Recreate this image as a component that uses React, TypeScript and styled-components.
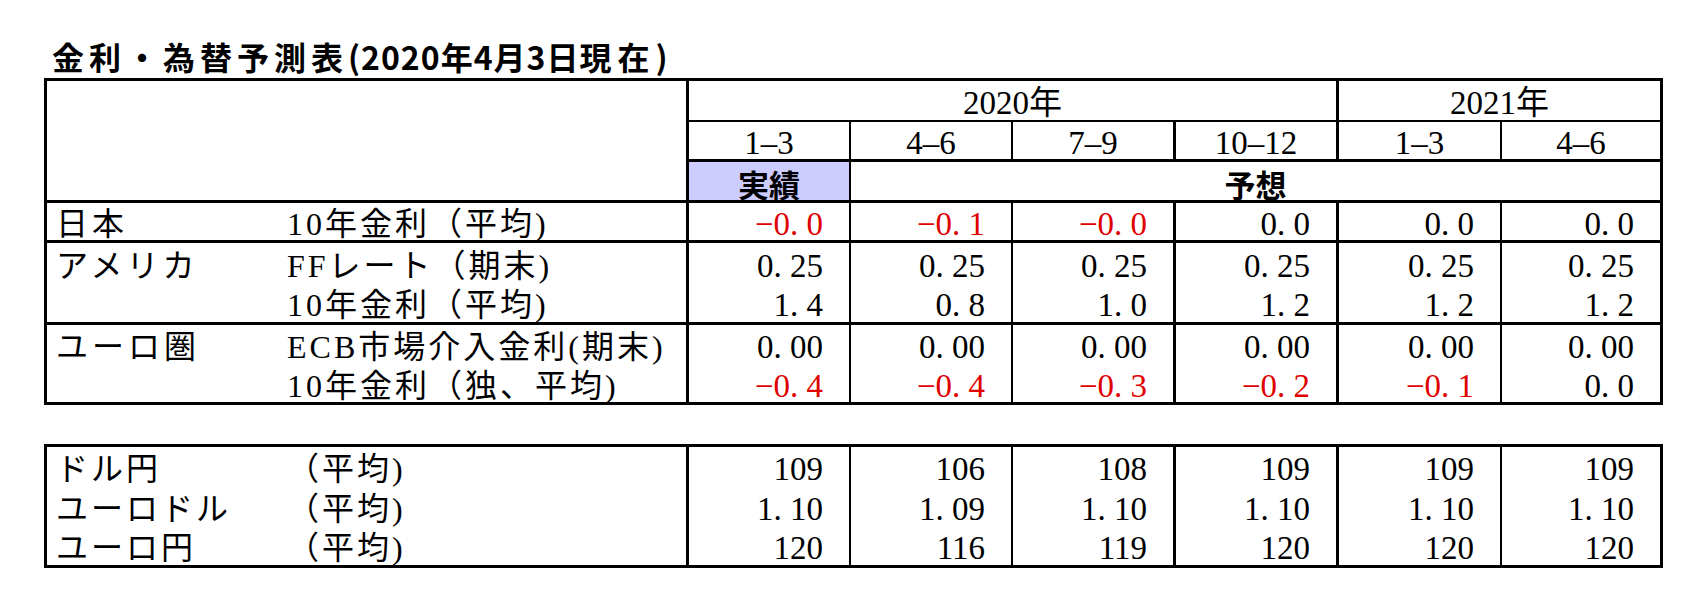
import React from 'react';
import styled, { createGlobalStyle } from 'styled-components';

const Global = createGlobalStyle`
  html, body { margin: 0; padding: 0; background: #ffffff; }
  body {
    font-family: "Liberation Serif", "Noto Sans CJK JP", serif;
    color: #000000;
  }
`;

const Page = styled.div`
  box-sizing: border-box;
  width: 1702px;
  padding: 36px 0 0 44px;
  display: flex;
  flex-direction: column;
`;

const Title = styled.h1`
  margin: 0 0 2px;
  padding-left: 8px;
  height: 40px;
  font-family: "Noto Sans CJK JP", sans-serif;
  font-size: 32px;
  font-weight: 700;
  line-height: 40px;
  white-space: nowrap;
`;

const Spaced = styled.span<{ $ls: number }>`
  letter-spacing: ${(p) => p.$ls}px;
`;

const Sheet = styled.div<{ $rows: string; $mt?: number }>`
  display: grid;
  width: fit-content;
  margin-top: ${(p) => p.$mt ?? 0}px;
  grid-template-columns: 642px 162px 162px 163px 163px 163px 161px;
  grid-template-rows: ${(p) => p.$rows};
  border-left: 3px solid #000;
  border-top: 3px solid #000;
`;

const Cell = styled.div<{ $r: number; $b: number; $span?: number; $rowSpan?: number }>`
  box-sizing: border-box;
  display: flex;
  align-items: center;
  padding-top: 5px;
  min-width: 0;
  white-space: nowrap;
  border-right: ${(p) => p.$r}px solid #000;
  border-bottom: ${(p) => p.$b}px solid #000;
  grid-column: span ${(p) => p.$span ?? 1};
  grid-row: span ${(p) => p.$rowSpan ?? 1};
`;

const HeadCell = styled(Cell)`
  justify-content: center;
  font-size: 33px;
  line-height: 33px;
`;

const StatusCell = styled(Cell)<{ $bg?: string }>`
  justify-content: center;
  background: ${(p) => p.$bg ?? 'transparent'};
  font-family: "Noto Sans CJK JP", sans-serif;
  font-weight: 700;
  font-size: 31px;
  line-height: 33px;
`;

const LabelCell = styled(Cell)`
  padding-left: 9px;
  font-size: 32px;
  line-height: 33px;
`;

const Country = styled.span<{ $ls: number }>`
  width: 231px;
  flex: none;
  letter-spacing: ${(p) => p.$ls}px;
`;

const Item = styled.span`
  letter-spacing: 3px;
`;

const ValueCell = styled(Cell)<{ $red?: boolean }>`
  justify-content: flex-end;
  padding-right: 26px;
  font-size: 33px;
  line-height: 33px;
  color: ${(p) => (p.$red ? '#e00000' : '#000000')};
`;

const Dot = styled.span`
  letter-spacing: 0.25em;
`;

function Num({ text }: { text: string }) {
  const i = text.indexOf('.');
  if (i < 0) return <>{text}</>;
  return (
    <>
      {text.slice(0, i)}
      <Dot>.</Dot>
      {text.slice(i + 1)}
    </>
  );
}

const RIGHT = [2, 2, 3, 3, 2, 3];

type Row = {
  country: string;
  item: string;
  values: string[];
  bottom: number;
};

const rates: Row[] = [
  { country: '日本', item: '10年金利（平均)', values: ['−0.0', '−0.1', '−0.0', '0.0', '0.0', '0.0'], bottom: 3 },
  { country: 'アメリカ', item: 'FFレート（期末)', values: ['0.25', '0.25', '0.25', '0.25', '0.25', '0.25'], bottom: 0 },
  { country: '', item: '10年金利（平均)', values: ['1.4', '0.8', '1.0', '1.2', '1.2', '1.2'], bottom: 3 },
  { country: 'ユーロ圏', item: 'ECB市場介入金利(期末)', values: ['0.00', '0.00', '0.00', '0.00', '0.00', '0.00'], bottom: 0 },
  { country: '', item: '10年金利（独、平均)', values: ['−0.4', '−0.4', '−0.3', '−0.2', '−0.1', '0.0'], bottom: 3 },
];

const fx: Row[] = [
  { country: 'ドル円', item: '（平均)', values: ['109', '106', '108', '109', '109', '109'], bottom: 0 },
  { country: 'ユーロドル', item: '（平均)', values: ['1.10', '1.09', '1.10', '1.10', '1.10', '1.10'], bottom: 0 },
  { country: 'ユーロ円', item: '（平均)', values: ['120', '116', '119', '120', '120', '120'], bottom: 3 },
];

const quarters = ['1–3', '4–6', '7–9', '10–12', '1–3', '4–6'];

function DataRows({ rows, spacing }: { rows: Row[]; spacing: number }) {
  return (
    <>
      {rows.map((row, ri) => (
        <React.Fragment key={ri}>
          <LabelCell $r={3} $b={row.bottom}>
            <Country $ls={spacing}>{row.country}</Country>
            <Item>{row.item}</Item>
          </LabelCell>
          {row.values.map((v, ci) => (
            <ValueCell key={ci} $r={RIGHT[ci]} $b={row.bottom} $red={v.startsWith('−')}>
              <Num text={v} />
            </ValueCell>
          ))}
        </React.Fragment>
      ))}
    </>
  );
}

export default function App() {
  return (
    <>
      <Global />
      <Page>
        <Title>
          <Spaced $ls={5}>金利・為替予測表</Spaced>
          <Spaced $ls={1}>(2020年4月3日</Spaced>
          <Spaced $ls={6}>現在)</Spaced>
        </Title>
        <Sheet $rows="41px 40px 41px 40px 41px 41px 40px 40px">
          <LabelCell $r={3} $b={3} $rowSpan={3} />
          <HeadCell $r={3} $b={2} $span={4}>2020年</HeadCell>
          <HeadCell $r={3} $b={2} $span={2}>2021年</HeadCell>
          {quarters.map((q, i) => (
            <HeadCell key={i} $r={RIGHT[i]} $b={3}>
              {q}
            </HeadCell>
          ))}
          <StatusCell $r={2} $b={3} $bg="#ccccff">実績</StatusCell>
          <StatusCell $r={3} $b={3} $span={5}>予想</StatusCell>
          <DataRows rows={rates} spacing={4} />
        </Sheet>
        <Sheet $rows="40px 40px 41px" $mt={39}>
          <DataRows rows={fx} spacing={3} />
        </Sheet>
      </Page>
    </>
  );
}
